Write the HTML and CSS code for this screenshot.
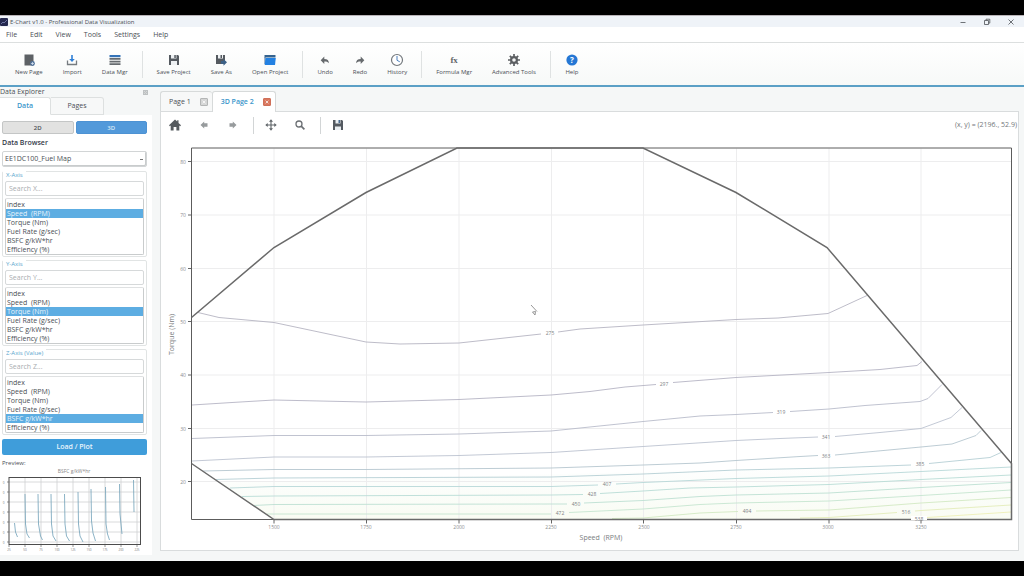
FILE: index.html
```html
<!DOCTYPE html>
<html lang="en">
<head>
<meta charset="utf-8">
<title>E-Chart v1.0 - Professional Data Visualization</title>
<link rel="stylesheet" href="styles.css">
</head>
<body>
<div class="app">
  <header class="titlebar">
    <svg class="app-logo" viewBox="0 0 8 8"><rect width="8" height="8" rx="1" fill="#24284f"/><path d="M1 6l2-2 1 1 3-3" stroke="#8c93c4" stroke-width=".7" fill="none"/></svg>
    <span class="app-title">E-Chart v1.0 - Professional Data Visualization</span>
    <div class="window-buttons">
      <button aria-label="Minimize"><svg viewBox="0 0 8 8"><path d="M1.500 4.500h5"/></svg></button>
      <button aria-label="Restore"><svg viewBox="0 0 8 8"><path d="M1.500 2.500h4v4h-4zM3 2.300V1.200h3.800v3.900H5.700"/></svg></button>
      <button aria-label="Close"><svg viewBox="0 0 8 8"><path d="M1.500 1.500l5 5M6.500 1.500l-5 5"/></svg></button>
    </div>
  </header>
  <nav class="menubar">
    <button>File</button><button>Edit</button><button>View</button><button>Tools</button><button>Settings</button><button>Help</button>
  </nav>
  <div class="toolbar">
    <button><svg viewBox="0 0 14 14"><path d="M2.500 1.500h9v11h-9z" fill="#5d6165"/><circle cx="10.500" cy="10.500" r="2.400" fill="#53749c"/><path d="M9 10.500h3M10.500 9v3" stroke="#dce6f2" stroke-width=".7"/></svg>New Page</button>
    <button><svg viewBox="0 0 14 14"><path d="M2.500 7.500v4h9v-4" fill="none" stroke="#767b80" stroke-width="1.300"/><path d="M6.200 2h1.600v4h2L7 9 4.200 6h2z" fill="#2f7fd6"/></svg>Import</button>
    <button><svg viewBox="0 0 14 14"><path d="M1.500 2h11v2.200h-11z" fill="#3473b8"/><path d="M1.500 5h11v1.800h-11zM1.500 7.700h11v1.800h-11zM1.500 10.300h11v1.800h-11z" fill="#666b6f"/></svg>Data Mgr</button>
    <span class="sep"></span>
    <button><svg viewBox="0 0 14 14"><path d="M2 2h9l1 1v9H2z" fill="#555a60"/><path d="M4 2h5.500v3.500H4zM4 8h6v4H4z" fill="#eef1f3"/><path d="M7.300 2h1.500v3H7.300z" fill="#555a60"/></svg>Save Project</button>
    <button><svg viewBox="0 0 14 14"><path d="M2 2h9v9H2z" fill="#555a60"/><path d="M4 2h5v3.500H4z" fill="#eef1f3"/><path d="M6.500 2h1.500v3H6.500z" fill="#555a60"/><path d="M7 8h2.500V6l3.500 3.300-3.500 3.500v-2H7z" fill="#3c6187"/></svg>Save As</button>
    <button><svg viewBox="0 0 14 14"><path d="M1.500 2h11v2.500h-11z" fill="#35638f"/><path d="M1.500 4h1v7h-1z" fill="#4c6f94"/><path d="M2.500 5h10.300l-.8 7H1.700z" fill="#2381e2"/></svg>Open Project</button>
    <span class="sep"></span>
    <button><svg viewBox="0 0 14 14"><path d="M6.300 3.500V6c3.200 0 4.500 1.500 4.700 4.300C9.800 8.700 8.500 8.300 6.300 8.400V11L2.700 7.200z" fill="#676b6e"/></svg>Undo</button>
    <button><svg viewBox="0 0 14 14"><path d="M7.700 3.500V6C4.500 6 3.200 7.500 3 10.300c1.200-1.600 2.500-2 4.700-1.900V11l3.600-3.800z" fill="#676b6e"/></svg>Redo</button>
    <button><svg viewBox="0 0 14 14"><circle cx="7" cy="7" r="5.500" fill="#fff" stroke="#73787d" stroke-width="1.200"/><path d="M7 3v4.300l2.800 1.500" fill="none" stroke="#4a7fbd"/></svg>History</button>
    <span class="sep"></span>
    <button><span class="fx">fx</span>Formula Mgr</button>
    <button><svg viewBox="0 0 14 14"><path d="M7 1v12M1 7h12M2.800 2.800l8.400 8.400M11.200 2.800l-8.400 8.400" stroke="#5c5f62" stroke-width="1.700"/><circle cx="7" cy="7" r="2.900" fill="#f4f5f5" stroke="#5c5f62" stroke-width="2.200"/></svg>Advanced Tools</button>
    <span class="sep"></span>
    <button><svg viewBox="0 0 14 14"><circle cx="7" cy="7" r="5.600" fill="#2577d4"/><text x="7" y="10" class="help-mark">?</text></svg>Help</button>
  </div>

  <div class="body">
    <aside class="sidebar">
      <div class="dock-title"><span>Data Explorer</span><button aria-label="Float panel"><svg viewBox="0 0 6 6"><path d="M.5.5h5v5h-5zM2 2h2v2H2z"/></svg></button></div>
      <div class="side-tabs"><button class="on">Data</button><button>Pages</button></div>
      <div class="side-pane">
        <div class="mode"><button>2D</button><button class="on">3D</button></div>
        <label class="heading" for="source">Data Browser</label>
        <select id="source" class="source"><option>EE1DC100_Fuel Map</option></select>

        <fieldset class="axis">
          <legend>X-Axis</legend>
          <input type="text" placeholder="Search X..." aria-label="Search X">
          <select size="6" aria-label="X-Axis"><option>index</option><option selected>Speed&nbsp; (RPM)</option><option>Torque (Nm)</option><option>Fuel Rate (g/sec)</option><option>BSFC g/kW*hr</option><option>Efficiency (%)</option></select>
        </fieldset>
        <fieldset class="axis">
          <legend>Y-Axis</legend>
          <input type="text" placeholder="Search Y..." aria-label="Search Y">
          <select size="6" aria-label="Y-Axis"><option>index</option><option>Speed&nbsp; (RPM)</option><option selected>Torque (Nm)</option><option>Fuel Rate (g/sec)</option><option>BSFC g/kW*hr</option><option>Efficiency (%)</option></select>
        </fieldset>
        <fieldset class="axis">
          <legend>Z-Axis (Value)</legend>
          <input type="text" placeholder="Search Z..." aria-label="Search Z">
          <select size="6" aria-label="Z-Axis"><option>index</option><option>Speed&nbsp; (RPM)</option><option>Torque (Nm)</option><option>Fuel Rate (g/sec)</option><option selected>BSFC g/kW*hr</option><option>Efficiency (%)</option></select>
        </fieldset>

        <button class="load">Load / Plot</button>
        <span class="preview-label">Preview:</span>
        <svg class="preview" viewBox="2 468 145 84">
          <g class="mini-text">
            <text x="74" y="473">BSFC g/kW*hr</text>
          </g>
          <path class="mini-grid" d="M25 477v67M41 477v67M57 477v67M73 477v67M89 477v67M105 477v67M121 477v67M137 477v67M9 482h131M9 492h131M9 502h131M9 512h131M9 522h131M9 532h131M9 542h131"/>
          <path class="mini-line" d="M14.500 523l1 9 2 5M25 494l.5 30 1.500 10 2.500 4M38 494l.5 30 2 12 2 4M51 494l.5 30 1.500 12 3 5M64.500 494l.5 30 1.500 12 3 5M78 492l.5 32 1.500 12 3 6M91 489l.5 32 1.500 12 2.500 8M105.500 487l.5 37 1.500 10 2 6M119.500 484l.5 30 2 20M133.500 480l.5 32"/>
          <rect class="mini-box" x="9" y="477.500" width="131.500" height="67"/>
          <path class="mini-tick" d="M7 482h2M7 492h2M7 502h2M7 512h2M7 522h2M7 532h2M7 542h2M9 545v2M25 545v2M41 545v2M57 545v2M73 545v2M89 545v2M105 545v2M121 545v2M137 545v2"/>
          <g class="mini-num">
            <text x="3.500" y="483.500">0</text><text x="3.500" y="493.500">0</text><text x="3.500" y="503.500">0</text><text x="3.500" y="513.500">0</text><text x="3.500" y="523.500">0</text><text x="3.500" y="533.500">0</text><text x="3.500" y="543.500">0</text>
            <text x="9" y="551">25</text><text x="25" y="551">50</text><text x="41" y="551">75</text><text x="57" y="551">100</text><text x="73" y="551">125</text><text x="89" y="551">150</text><text x="105" y="551">175</text><text x="121" y="551">200</text><text x="137" y="551">225</text>
          </g>
        </svg>
      </div>
    </aside>

    <main class="work">
      <div class="page-tabs">
        <div class="page-tab"><button class="tab-name">Page 1</button><button class="close" aria-label="Close Page 1"><svg viewBox="0 0 8 8"><path d="M2.200 2.200l3.600 3.600M5.800 2.200L2.200 5.800"/></svg></button></div>
        <div class="page-tab on"><button class="tab-name">3D Page 2</button><button class="close" aria-label="Close 3D Page 2"><svg viewBox="0 0 8 8"><path d="M2.200 2.200l3.600 3.600M5.800 2.200L2.200 5.800"/></svg></button></div>
      </div>
      <section class="page">
        <div class="plot-tools">
          <button aria-label="Home"><svg viewBox="0 0 14 14"><path d="M7 1.500l2.200 2.100V2.300h1.300v2.600L13 7.300l-.8.900-.9-.8v5H8.400V9H5.600v3.400H2.700v-5l-.9.800-.8-.9z" fill="#555a5e"/></svg></button>
          <button aria-label="Back"><svg viewBox="0 0 14 14"><path d="M7.200 3.500L3.500 7l3.700 3.500V8.700h3.300V5.300H7.200z" fill="#979b9d"/></svg></button>
          <button aria-label="Forward"><svg viewBox="0 0 14 14"><path d="M6.800 3.500L10.500 7l-3.700 3.500V8.700H3.500V5.300h3.300z" fill="#979b9d"/></svg></button>
          <span class="sep"></span>
          <button aria-label="Pan"><svg viewBox="0 0 14 14"><path d="M7 3v8M3 7h8" stroke="#5f6468" stroke-width="1.100"/><path d="M7 1.300l2 2.400H5zM7 12.700l2-2.400H5zM1.300 7l2.400-2v4zM12.700 7l-2.400-2v4z" fill="#5f6468"/></svg></button>
          <button aria-label="Zoom"><svg viewBox="0 0 14 14"><circle cx="6" cy="6" r="3" fill="none" stroke="#6b6f73" stroke-width="1.300"/><path d="M8.200 8.200l3.200 3.200" stroke="#6b6f73" stroke-width="1.700"/></svg></button>
          <span class="sep"></span>
          <button aria-label="Save figure"><svg viewBox="0 0 14 14"><path d="M2 2h9l1 1v9H2z" fill="#545a61"/><path d="M4.500 2h5v3.500h-5zM4 8.500h6V12H4z" fill="#e9eef2"/><path d="M7.500 2h1.500v3H7.500z" fill="#47698e"/></svg></button>
          <output class="coords">(x, y) = (2196., 52.9)</output>
        </div>
        <svg class="chart" viewBox="161 138 857 411">
          <defs><linearGradient id="floor" x1="0" x2="0" y1="0" y2="1"><stop offset="0" stop-color="#f4fbf6" stop-opacity="0"/><stop offset="1" stop-color="#fafcf3"/></linearGradient></defs>
          <path d="M274 519L220 482L1011 462V519z" fill="url(#floor)"/>
          <path class="grid" d="M274 148v371M366.500 148v371M459 148v371M551.500 148v371M643.500 148v371M736.500 148v371M829 148v371M921 148v371M192 161h819M192 214.500h819M192 268h819M192 321h819M192 374.500h819M192 428h819M192 481h819"/>
          <g class="contour">
            <path stroke="#b5b4c2" d="M198 312L219 317L274 322L366 341.500L400 343.500L459 342.500L500 338L541 333.500M558 331.500L580 328.500L643 324.500L736 319L778 317.500L828 313L867 295"/>
            <path stroke="#b5b4c4" d="M192 404.500L232 402L274 399.500L366 401.500L459 399L551 394.500L590 391L625 386.500L656 384M673 382L736 377L829 372L880 369L917 365L922 361"/>
            <path stroke="#b9bccb" d="M192 438L274 435L366 435L459 433.500L551 430.500L643 421L700 415.500L736 414L773 412M790 411L829 408.500L865 405L920 401L928 398L942 384"/>
            <path stroke="#bcc3d0" d="M192 460.500L274 456.500L366 456.500L459 455L551 452L643 446L736 440L780 438L818 436.500M835 436L880 432L921 428L951 417L962 407"/>
            <path stroke="#b6c6cf" d="M203 470.500L274 469L366 469L551 467.500L643 464.500L700 462.500L736 460L800 456L818 455M835 454.500L921 446.500L952 443.500L976 435L981 430"/>
            <path stroke="#b5cfd5" d="M216 479L274 477.500L551 476.500L643 473.500L736 469.500L829 467.500L911 464.500M929 463L990 457L1001 452"/>
            <path stroke="#b8d8d8" d="M230 487.500L274 486L551 486L598 484.500M616 483.500L643 482L736 478L829 475.500L921 471L1011 466.500"/>
            <path stroke="#b9dcd6" d="M242 496L274 495.500L551 494.500L583 494M600 493L643 490.500L690 487.500L736 486.500L829 484L921 479L1011 474.500"/>
            <path stroke="#bde0d3" d="M253 505L274 504L551 503.500L567 503.500M584 502.500L643 500L700 496L736 494.500L829 492.500L921 487L1011 482"/>
            <path stroke="#c6e5d0" d="M267 513.500L551 513.500M569 512L643 508.500L700 504L736 502.500L829 500.500L921 495L1011 489.500"/>
            <path stroke="#d3e9c3" d="M612 518L643 517.500L700 512.500L738 511M756 510.500L829 509.500L921 502.500L1011 497"/>
            <path stroke="#e3ecba" d="M800 517.500L829 517L870 514L897 512M915 510.500L921 510L1011 504.500"/>
            <path stroke="#eeefb8" d="M927 517L1011 511.500"/>
          </g>
          <path class="frame" d="M191.500 147.500H1011.500V519H191.500z"/>
          <path class="edge" d="M191.500 317L274 247L366 192L457 147.500H643L736 192L827 247L1011.500 463V519H274L191.500 463"/>
          <path class="tick" d="M188 161h3M188 214.500h3M188 268h3M188 321h3M188 374.500h3M188 428h3M188 481h3M274 519v4M366.500 519v4M459 519v4M551.500 519v4M643.500 519v4M736.500 519v4M829 519v4M921 519v4"/>
          <path d="M911 515.500h16v4h-16z" fill="#fff"/>
          <g class="num">
            <text x="274" y="528.500">1500</text><text x="366" y="528.500">1750</text><text x="459" y="528.500">2000</text><text x="551" y="528.500">2250</text><text x="644" y="528.500">2500</text><text x="736" y="528.500">2750</text><text x="828" y="528.500">3000</text><text x="921" y="528.500">3250</text>
            <text x="183" y="163">80</text><text x="183" y="216.500">70</text><text x="183" y="270">60</text><text x="183" y="323">50</text><text x="183" y="376.500">40</text><text x="183" y="430">30</text><text x="183" y="483">20</text>
          </g>
          <g class="num level">
            <text x="550" y="334.500">275</text><text x="664" y="385">297</text><text x="781" y="413.500">319</text><text x="826" y="438">341</text><text x="826" y="457">363</text><text x="920" y="465.500">385</text><text x="607" y="485.500">407</text><text x="592" y="495.500">428</text><text x="576" y="505">450</text><text x="560" y="514">472</text><text x="747" y="512.500">494</text><text x="906" y="513">516</text><text x="919" y="520">538</text>
          </g>
          <text class="axis-name" x="601" y="539.500">Speed&#160; (RPM)</text>
          <text class="axis-name" transform="translate(173.500 334) rotate(-90)">Torque (Nm)</text>
          <path d="M531 304.500l6 6.500M532.500 311.500l2.500 3 .5-3.500z" fill="none" stroke="#8b8b8b" stroke-width=".9"/>
        </svg>
      </section>
    </main>
  </div>
</div>
</body>
</html>
```
FILE: styles.css
```css
* { box-sizing: border-box; }

body {
  margin: 0;
  padding: 15px 0;
  height: 100vh;
  background: #000;
  color: #4a4f55;
  font: 6px/8px "Open Sans", "Noto Sans", sans-serif;
}

button, input, select { font: inherit; color: inherit; margin: 0; }
button { padding: 0; border: 0; background: none; }
svg { display: block; }

.app { height: 100%; display: flex; flex-direction: column; background: #f5f7f7; }

/* Title and menu */
.titlebar { display: flex; align-items: center; gap: 2px; height: 12px; flex: none; background: #eff3f8; border-top: 1px solid #b9b4b8; }
.app-logo { width: 8px; height: 8px; }
.window-buttons { margin-left: auto; display: flex; gap: 16px; padding-right: 9px; }
.window-buttons svg { width: 8px; height: 8px; fill: none; stroke: #4d5155; stroke-width: .8; }

.menubar { display: flex; gap: 13px; height: 16px; flex: none; padding: 1px 6px 0; background: #fff; border-bottom: 1px solid #dcdfdf; font-size: 7px; }

/* Main toolbar */
.toolbar { display: flex; align-items: center; height: 44px; flex: none; padding: 0 5px; background: linear-gradient(#fff, #f7f9f8); border-bottom: 2px solid #5ba0c6; }
.toolbar button { display: flex; flex-direction: column; align-items: center; gap: 1px; padding: 0 10px; white-space: nowrap; }
.toolbar svg { width: 14px; height: 14px; }
.sep { width: 1px; height: 27px; margin: 0 4px; background: #dfe2e2; }
.fx { font: bold 9px/14px "Liberation Serif", serif; color: #63676a; }
.help-mark { font: bold 8px "Open Sans", sans-serif; fill: #fff; text-anchor: middle; }

.body { flex: 1; min-height: 0; display: flex; gap: 8px; padding-right: 5px; }

/* Sidebar */
.sidebar { width: 152px; flex: none; display: flex; flex-direction: column; padding-bottom: 6px; }
.dock-title { display: flex; justify-content: space-between; align-items: center; height: 10px; padding-right: 4px; font-size: 7px; }
.dock-title svg { width: 5px; height: 5px; fill: none; stroke: #8d9295; stroke-width: .7; }
.side-tabs { display: flex; height: 18px; font-size: 7px; }
.side-tabs button { width: 53px; border: 1px solid #dde0e0; border-left: 0; border-radius: 0 3px 0 0; background: #f7f8f8; }
.side-tabs button.on { width: 51px; background: #fff; border-bottom-color: #fff; color: #3c97cb; font-weight: 600; }
.side-pane { flex: 1; min-height: 0; display: flex; flex-direction: column; padding: 6px 5px 0 2px; background: #fff; }

.mode { display: flex; gap: 2px; height: 13px; flex: none; }
.mode button { flex: 1; border: 1px solid #c4c6c6; border-radius: 2px; background: #e2e2e1; font-weight: 600; }
.mode button.on { border-color: #4d92d3; background: #5299da; color: #dcebf8; }
.heading { margin: 4px 0 3px; line-height: 10px; font-size: 7px; font-weight: 600; color: #343a48; }
.source {
  height: 16px;
  flex: none;
  appearance: none;
  padding: 0 2px;
  border: 1px solid #d2d5d6;
  border-radius: 2px;
  background: linear-gradient(#777, #777) right 3px center / 3px 1px no-repeat #fff;
  box-shadow: inset -1px -1px 0 #c9cccd;
  font-size: 7px;
}

.axis { position: relative; min-width: 0; margin: 4px 0 0; padding: 9px 2px 2px; height: 86px; flex: none; border: 1px solid #e1e4e4; border-radius: 2px; display: flex; flex-direction: column; gap: 2px; font-size: 7px; }
.axis + .axis { margin-top: 3px; }
.axis legend { position: absolute; top: -1px; left: 0; padding: 0 3px; background: #fff; color: #5aa6cd; font-size: 6px; }
.axis input { width: 100%; height: 15px; flex: none; padding: 0 3px; border: 1px solid #d6d9da; border-radius: 2px; background: #fff; outline: 0; }
.axis input::placeholder { color: #a9adb0; opacity: 1; }
.axis select { width: 100%; height: 57px; padding: 1px 0; border: 1px solid #c9cccd; border-top-color: #dfe1e2; background: #fff; overflow: hidden; outline: 0; scrollbar-width: none; }
.axis option { height: 9px; min-height: 9px; padding: 0 1px; line-height: 9px; color: #4a4f55; }
.axis option:checked { background: #5dade2 linear-gradient(#5dade2, #5dade2); color: #e8f4fc; }

.load { height: 16px; flex: none; margin-top: 4px; border-radius: 2px; background: #3f9dda; color: #eaf5fc; font-size: 7px; font-weight: 600; }
.preview-label { margin-top: 4px; line-height: 8px; }
.preview { width: 100%; min-height: 0; margin-top: 1px; }
.mini-grid { stroke: #cfd1d2; stroke-width: .8; }
.mini-line { fill: none; stroke: #6f9fb8; stroke-width: .8; }
.mini-box { fill: none; stroke: #4c4c4c; }
.mini-tick { stroke: #666; stroke-width: .7; }
.mini-text { font-size: 5px; fill: #888; text-anchor: middle; }
.mini-num { font-size: 3px; fill: #777; text-anchor: middle; }

/* Pages */
.work { flex: 1; min-width: 0; display: flex; flex-direction: column; padding: 4px 0 10px; }
.page-tabs { display: flex; height: 20px; flex: none; }
.page-tab { display: flex; align-items: center; gap: 9px; padding: 0 4px 0 8px; border: 1px solid #d7dada; border-bottom: 0; border-right: 0; border-radius: 3px 3px 0 0; background: #f7f8f8; }
.page-tab.on { margin-bottom: -1px; border-right: 1px solid #d7dada; background: #fff; color: #3c97cb; font-weight: 600; z-index: 1; }
.close { width: 8px; height: 8px; background: #d5d6d6; border: 1px solid #b4b6b6; border-radius: 1px; }
.close svg { stroke: #fff; width: 6px; height: 6px; }
.on .close { background: #d9775e; border-color: #cf7059; }
.tab-name { font-size: 7px; }
.page { flex: 1; min-height: 0; display: flex; flex-direction: column; border: 1px solid #d9dcdd; background: #fff; }
.plot-tools { display: flex; align-items: center; height: 26px; flex: none; padding: 0 1px 0 7px; }
.plot-tools button { margin-right: 15px; }
.plot-tools svg { width: 14px; height: 14px; }
.plot-tools .sep { margin: 0 10px 0 -2px; height: 17px; background: #d2d5d6; }
.coords { margin-left: auto; color: #73777b; font-size: 7px; }

/* Chart */
.chart { width: 100%; flex: 1; min-height: 0; }
.grid { stroke: #ededee; }
.contour { fill: none; stroke-width: .9; }
.frame { fill: none; stroke: #5c5c5c; }
.edge { fill: none; stroke: #6a6a6a; stroke-width: 1.500; }
.tick { stroke: #666; }
.num { font-size: 5px; fill: #8b8e90; text-anchor: middle; }
.level { fill: #7e8184; }
.axis-name { font-size: 7px; fill: #7a7d80; text-anchor: middle; }
```
